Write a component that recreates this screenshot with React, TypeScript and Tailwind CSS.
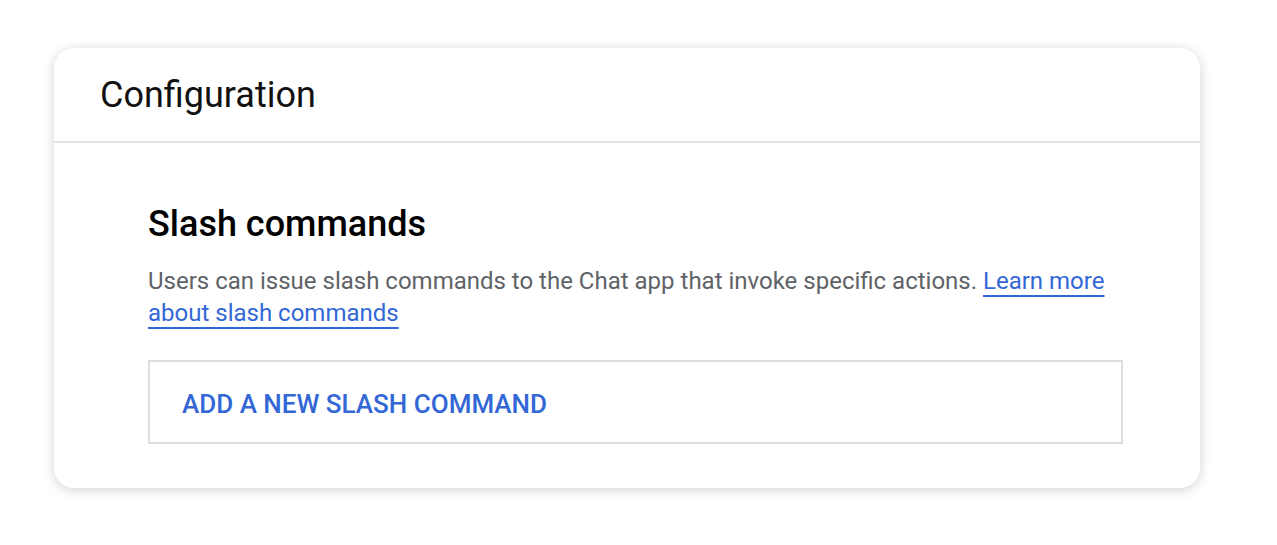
import React from "react";

const App: React.FC = () => {
  return (
    <div className="min-h-screen w-full bg-white pt-12 pl-[54px] font-['Roboto',sans-serif]">
      <div className="w-[1146px] h-[440px] rounded-[20px] bg-white shadow-[0_2px_12px_rgba(0,0,0,0.18)] flex flex-col">
        {/* Header */}
        <div className="h-[95px] border-b-2 border-[#e3e3e3] pl-[46px] flex items-center">
          <h1 className="text-[36px] text-[#111] leading-[40px]">Configuration</h1>
        </div>

        {/* Content */}
        <div className="pl-[94px] pr-[77px] pt-[60px]">
          <h2 className="text-[36px] font-medium text-black leading-[42px]">
            Slash commands
          </h2>
          <p className="mt-[20px] text-[24px] leading-[32px] text-[#5f6368]">
            Users can issue slash commands to the Chat app that invoke specific actions.{" "}
            <a
              href="#"
              className="text-[#3367d6] underline decoration-2 underline-offset-[6px]"
            >
              Learn more about slash commands
            </a>
          </p>
          <button className="mt-[31px] w-full h-[84px] border-2 border-[#dedede] text-left pl-[32px] pt-[4px] text-[26px] font-medium text-[#3367d6]">
            ADD A NEW SLASH COMMAND
          </button>
        </div>
      </div>
    </div>
  );
};

export default App;
